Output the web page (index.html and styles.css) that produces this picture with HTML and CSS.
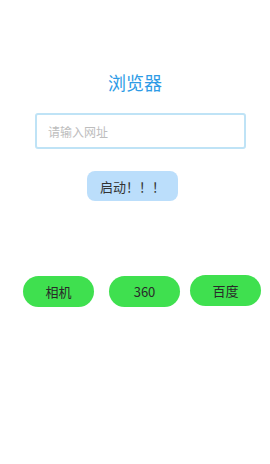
FILE: index.html
```html
<!DOCTYPE html>
<html lang="zh">
<head>
    <meta charset="UTF-8">
    <meta name="viewport" content="width=device-width, initial-scale=1.0">
    <title>浏览器</title>
    <link rel="stylesheet" href="styles.css">
</head>
<body>
    <div class="page">
        <h1 class="title">浏览器</h1>

        <input class="url-input" type="text" placeholder="请输入网址">

        <button class="start-button">启动！！！</button>

        <div class="apps">
            <button class="app-button app-camera">相机</button>
            <button class="app-button app-360">360</button>
            <button class="app-button app-baidu">百度</button>
        </div>
    </div>
</body>
</html>
```

FILE: styles.css
```css
body {
    margin: 0;
    background-color: #fff;
    font-family: "Noto Sans CJK SC", "Noto Sans", Roboto, sans-serif;
}

.page {
    display: flex;
    flex-direction: column;
    width: 270px;
    height: 464px;
}

.title {
    margin: 71px 0 0 0;
    font-size: 18px;
    line-height: 22px;
    font-weight: normal;
    color: #2e9be6;
    text-align: center;
}

.url-input {
    box-sizing: border-box;
    width: 211px;
    height: 36px;
    margin: 20px 0 0 35px;
    padding: 0 11px;
    border: 2px solid #bfe3f6;
    border-radius: 3px;
    font-family: inherit;
    font-size: 12px;
    color: #333;
    outline: none;
}

.url-input::placeholder {
    color: #bdbdbd;
}

.start-button {
    width: 91px;
    height: 30px;
    margin: 22px 0 0 87px;
    padding: 0;
    border: none;
    border-radius: 8px;
    background-color: #bbdefb;
    font-family: inherit;
    font-size: 13px;
    color: #333;
}

.apps {
    display: flex;
    align-items: flex-start;
    margin-top: 75px;
    padding-left: 23px;
}

.app-button {
    width: 71px;
    height: 31px;
    padding: 0;
    border: none;
    border-radius: 16px;
    background-color: #3fe04f;
    font-family: inherit;
    font-size: 13px;
    color: #2a2a2a;
}

.app-360 {
    margin-left: 15px;
}

.app-baidu {
    margin-left: 10px;
    margin-top: -1px;
}
```
